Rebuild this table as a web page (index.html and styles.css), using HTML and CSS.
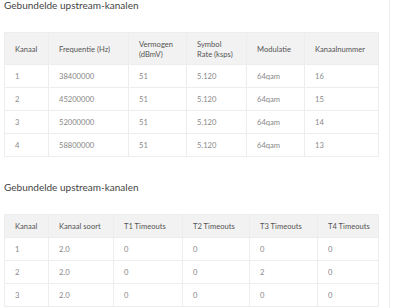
FILE: index.html
```html
<!DOCTYPE html>
<html>
<head>
<meta charset="utf-8">
<link rel="stylesheet" href="styles.css">
</head>
<body>
<div class="page">
  <h2 class="title">Gebundelde upstream-kanalen</h2>
  <table class="grid grid-one">
    <colgroup>
      <col class="c44"><col class="c80"><col class="c58"><col class="c60"><col class="c58"><col>
    </colgroup>
    <thead>
      <tr><th>Kanaal</th><th>Frequentie (Hz)</th><th>Vermogen<br>(dBmV)</th><th>Symbol<br>Rate (ksps)</th><th>Modulatie</th><th>Kanaalnummer</th></tr>
    </thead>
    <tbody>
      <tr><td>1</td><td>38400000</td><td>51</td><td>5.120</td><td>64qam</td><td>16</td></tr>
      <tr><td>2</td><td>45200000</td><td>51</td><td>5.120</td><td>64qam</td><td>15</td></tr>
      <tr><td>3</td><td>52000000</td><td>51</td><td>5.120</td><td>64qam</td><td>14</td></tr>
      <tr><td>4</td><td>58800000</td><td>51</td><td>5.120</td><td>64qam</td><td>13</td></tr>
    </tbody>
  </table>
  <h2 class="title title-second">Gebundelde upstream-kanalen</h2>
  <table class="grid">
    <colgroup>
      <col class="c44"><col class="c65"><col class="c69"><col class="c67"><col class="c68"><col>
    </colgroup>
    <thead>
      <tr><th>Kanaal</th><th>Kanaal soort</th><th>T1 Timeouts</th><th>T2 Timeouts</th><th>T3 Timeouts</th><th>T4 Timeouts</th></tr>
    </thead>
    <tbody>
      <tr><td>1</td><td>2.0</td><td>0</td><td>0</td><td>0</td><td>0</td></tr>
      <tr><td>2</td><td>2.0</td><td>0</td><td>0</td><td>2</td><td>0</td></tr>
      <tr><td>3</td><td>2.0</td><td>0</td><td>0</td><td>0</td><td>0</td></tr>
    </tbody>
  </table>
</div>
</body>
</html>
```

FILE: styles.css
```css
html, body {
  margin: 0;
  padding: 0;
  background: #fff;
}
body {
  font-family: Lato, "Open Sans", sans-serif;
  overflow: hidden;
}
.page {
  width: 385px;
  height: 308px;
  padding-left: 4px;
  border-right: 1px solid #efefef;
}
.title {
  margin: 0;
  font-size: 10px;
  line-height: 10px;
  font-weight: 400;
  color: #444;
}
.title-second {
  margin-top: 25px;
}
.grid {
  margin-top: 22px;
  width: 375px;
  border-collapse: collapse;
  table-layout: fixed;
  font-size: 7.6px;
  line-height: 10px;
}
.grid th, .grid td {
  border: 1px solid #ededed;
  padding: 6px 10px;
  text-align: left;
  vertical-align: middle;
  white-space: nowrap;
}
.grid th {
  background: #f2f2f2;
  color: #555;
  font-weight: 400;
}
.grid td {
  color: #888;
}
.grid-one th {
  padding: 5.5px 10px;
}
.c44 { width: 44px; }
.c80 { width: 80px; }
.c58 { width: 58px; }
.c60 { width: 60px; }
.c65 { width: 65px; }
.c69 { width: 69px; }
.c67 { width: 67px; }
.c68 { width: 68px; }
```
